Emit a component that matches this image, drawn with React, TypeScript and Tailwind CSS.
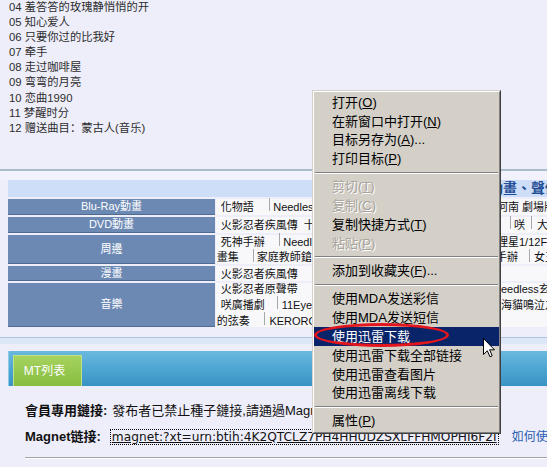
import React from "react";

type Item =
  | { label: React.ReactNode; disabled?: boolean; active?: boolean }
  | "sep";

const U = ({ c }: { c: string }) => <span className="underline">{c}</span>;

const menu: Item[] = [
  { label: <>打开(<U c="O" />)</> },
  { label: <>在新窗口中打开(<U c="N" />)</> },
  { label: <>目标另存为(<U c="A" />)...</> },
  { label: <>打印目标(<U c="P" />)</> },
  "sep",
  { label: <>剪切(<U c="T" />)</>, disabled: true },
  { label: <>复制(<U c="C" />)</>, disabled: true },
  { label: <>复制快捷方式(<U c="T" />)</> },
  { label: <>粘贴(<U c="P" />)</>, disabled: true },
  "sep",
  { label: <>添加到收藏夹(<U c="F" />)...</> },
  "sep",
  { label: "使用MDA发送彩信" },
  { label: "使用MDA发送短信" },
  { label: "使用迅雷下载", active: true },
  { label: "使用迅雷下载全部链接" },
  { label: "使用迅雷查看图片" },
  { label: "使用迅雷离线下载" },
  "sep",
  { label: <>属性(<U c="P" />)</> },
];

const songs = [
  "04 羞答答的玫瑰静悄悄的开",
  "05 知心爱人",
  "06 只要你过的比我好",
  "07 牵手",
  "08 走过咖啡屋",
  "09 弯弯的月亮",
  "10 恋曲1990",
  "11 梦醒时分",
  "12 赠送曲目：蒙古人(音乐)",
];

function Bar() {
  return <span className="inline-block w-px h-[13px] bg-[#a8a8a8]" />;
}

function Line({ left, right }: { left: React.ReactNode; right?: React.ReactNode }) {
  return (
    <div className="flex whitespace-nowrap h-[15.7px] items-center shrink-0">
      <div className="w-[277px] shrink-0 overflow-hidden flex items-center">{left}</div>
      <div className="flex items-center shrink-0">{right}</div>
    </div>
  );
}

function Row({
  label,
  h,
  children,
}: {
  label: string;
  h: string;
  children: React.ReactNode;
}) {
  return (
    <div className={"flex mt-[2px] " + h}>
      <div className="w-[207px] shrink-0 bg-[#6c89b4] border-b border-[#4f6a93] text-white flex items-center justify-center">
        {label}
      </div>
      <div className="ml-[1px] w-[331px] shrink-0 bg-[#f8f8fb] flex flex-col justify-center">
        {children}
      </div>
    </div>
  );
}

export default function App() {
  return (
    <div className="relative w-[547px] h-[467px] overflow-hidden bg-[#eeeefa] font-['Liberation_Sans','Noto_Sans_CJK_TC',sans-serif]">
      {/* song list */}
      <div className="pl-[9px] text-[11.3px] leading-[15.1px] text-[#2d2d2d] font-['Liberation_Sans','Noto_Sans_CJK_SC',sans-serif]">
        {songs.map((s) => (
          <div key={s} className="whitespace-nowrap">
            {s}
          </div>
        ))}
      </div>
      <div className="h-[33px]" />
      <div className="h-[2px] bg-[#aabccc]" />
      <div className="h-[9px] bg-[#f2f2fc]" />

      {/* category table */}
      <div className="pl-[8px] text-[11px] text-[#111]">
        <div className="h-[17px] bg-[#cfdef8] flex items-center pl-[481px] whitespace-nowrap">
          <span className="font-bold text-[14px] text-[#1f4e96]">動畫、聲優、電影</span>
        </div>
        <Row label="Blu-Ray動畫" h="h-[16px]">
          <Line
            left={
              <>
                <span className="pl-[4.7px]">化物語</span>
                <span className="ml-[15px]"><Bar /></span>
                <span className="pl-[3.5px]">Needless 番外篇</span>
              </>
            }
            right={<span className="pl-[4px]">河南 劇場版</span>}
          />
        </Row>
        <Row label="DVD動畫" h="h-[16px]">
          <Line
            left={
              <>
                <span className="pl-[4.7px]">火影忍者疾風傳</span>
                <span className="pl-[6px]">十二國記</span>
              </>
            }
            right={
              <>
                <span className="ml-[17px]"><Bar /></span>
                <span className="pl-[3px]">咲</span>
                <span className="ml-[6px]"><Bar /></span>
                <span className="pl-[5px]">大王</span>
              </>
            }
          />
        </Row>
        <Row label="周邊" h="h-[29.5px]">
          <Line
            left={
              <>
                <span className="pl-[4.7px]">死神手辦</span>
                <span className="ml-[14px]"><Bar /></span>
                <span className="pl-[3.5px]">Needless 手辦</span>
              </>
            }
            right={<span className="pl-[4px]">理星1/12F</span>}
          />
          <Line
            left={
              <>
                <span className="pl-[0.7px]">畫集</span>
                <span className="ml-[14.5px]"><Bar /></span>
                <span className="pl-[2.5px]">家庭教師鎗</span>
              </>
            }
            right={
              <>
                <span className="pl-[3px]">手辦</span>
                <span className="ml-[11px]"><Bar /></span>
                <span className="pl-[4px]">女王</span>
              </>
            }
          />
        </Row>
        <Row label="漫畫" h="h-[15px]">
          <Line left={<span className="pl-[4.7px]">火影忍者疾風傳</span>} />
        </Row>
        <Row label="音樂" h="h-[43.5px]">
          <Line
            left={<span className="pl-[4.7px]">火影忍者原聲帶</span>}
            right={<span>Needless玄</span>}
          />
          <Line
            left={
              <>
                <span className="pl-[4.7px]">咲廣播劇</span>
                <span className="ml-[12px]"><Bar /></span>
                <span className="pl-[4px]">11Eyes</span>
              </>
            }
            right={<span className="pl-[8px]">海貓鳴泣之時</span>}
          />
          <Line
            left={
              <>
                <span className="pl-[0.7px]">的弦奏</span>
                <span className="ml-[14px]"><Bar /></span>
                <span className="pl-[4.7px]">KERORO</span>
              </>
            }
          />
        </Row>
      </div>

      <div className="h-[10px]" />
      <div className="h-[1px] bg-[#b0c4e4]" />
      <div className="h-[6px] bg-[#dde6f6]" />
      <div className="h-[7px]" />

      {/* tab bar */}
      <div className="ml-[8px] h-[35px] bg-gradient-to-b from-[#6ab9df] via-[#4ea6d2] to-[#3893c4] flex items-end pl-[4px] border-l border-[#8ccbe8]">
        <div className="w-[69px] h-[31px] bg-gradient-to-b from-[#a6d35f] to-[#86bd3e] border-t border-l border-r border-[#bfe28a] flex items-center justify-center text-white text-[12px] pr-[6px]">
          MT列表
        </div>
      </div>

      {/* links */}
      <div className="pl-[25px] pt-[13px] text-[13px] text-[#111] whitespace-nowrap">
        <div className="h-[24px] flex items-center">
          <span className="font-bold">會員專用鏈接:</span>
          <span className="ml-[5px]">發布者已禁止種子鏈接,請通過Magnet鏈接下載</span>
        </div>
        <div className="h-[24px] mt-[2px] flex items-center">
          <span className="font-bold">Magnet链接:</span>
          <span className="ml-[9px] inline-block border border-dotted border-black px-[1px] leading-[14px] underline font-['DejaVu_Sans',sans-serif] text-[12.2px]">
            magnet:?xt=urn:btih:4K2QTCLZ7PH4HHUDZSXLFFHMOPHI6F2I
          </span>
          <span className="ml-[13px] text-[12px] text-[#2a5db0]">如何使用Magnet</span>
        </div>
        <div className="mt-[8px] h-px bg-[#a4a4a4]" />
        <div className="h-px bg-white" />
      </div>

      {/* context menu */}
      <div className="absolute left-[312px] top-[90px] w-[189px] bg-[#d4d0c8] border border-t-[#d4d0c8] border-l-[#d4d0c8] border-r-[#404040] border-b-[#404040] z-10 font-['Liberation_Sans','Noto_Sans_CJK_SC',sans-serif]">
        <div className="border border-t-white border-l-white border-r-[#808080] border-b-[#808080] py-[1px]">
          {menu.map((it, i) =>
            it === "sep" ? (
              <div key={i} className="h-[9px] flex flex-col justify-center px-[1px]">
                <div className="h-px bg-[#808080]" />
                <div className="h-px bg-white" />
              </div>
            ) : (
              <div
                key={i}
                className={
                  it.active
                    ? "h-[18.85px] flex items-center pl-[18px] text-[13px] whitespace-nowrap bg-[#0a246a] text-white"
                    : it.disabled
                    ? "h-[18.85px] flex items-center pl-[18px] text-[13px] whitespace-nowrap text-[#a8a49c] [text-shadow:1px_1px_0_#ffffff]"
                    : "h-[18.85px] flex items-center pl-[18px] text-[13px] whitespace-nowrap text-black"
                }
              >
                {it.label}
              </div>
            )
          )}
        </div>
      </div>

      {/* red ellipse annotation */}
      <div className="absolute left-[314px] top-[323px] w-[135px] h-[24px] rounded-[50%] border-[3.5px] border-[#e3161e] z-20" />

      {/* mouse cursor */}
      <svg
        className="absolute left-[483px] top-[338px] z-30"
        width="12"
        height="20"
        viewBox="0 0 12 20"
      >
        <path
          d="M0.5 0.5 L0.5 16.5 L4.3 12.8 L7 18.8 L9.2 17.8 L6.6 11.8 L11.5 11.8 Z"
          fill="#ffffff"
          stroke="#000000"
          strokeWidth="1"
          strokeLinejoin="miter"
        />
      </svg>
    </div>
  );
}
